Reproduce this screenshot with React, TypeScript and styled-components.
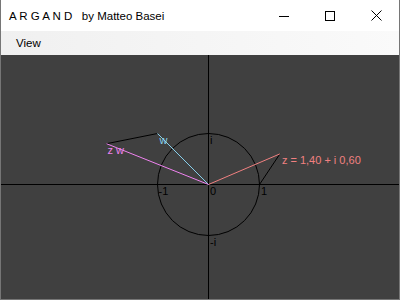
import styled, { createGlobalStyle } from "styled-components";

const GlobalStyle = createGlobalStyle`
  html, body {
    margin: 0;
    padding: 0;
    background: #ffffff;
  }
`;

const Window = styled.div`
  width: 400px;
  height: 300px;
  box-sizing: border-box;
  border: 1px solid #767676;
  border-top: none;
  display: flex;
  flex-direction: column;
  font-family: "Liberation Sans", Arial, sans-serif;
  overflow: hidden;
`;

const TitleBar = styled.div`
  height: 31px;
  flex: none;
  display: flex;
  align-items: center;
  background: #ffffff;
`;

const Title = styled.div`
  flex: 1;
  padding-left: 8px;
  font-size: 11.5px;
  color: #000000;
  white-space: pre;
  padding-top: 1px;
`;

const Controls = styled.div`
  display: flex;
  height: 100%;
`;

const ControlButton = styled.div`
  width: 46px;
  height: 100%;
  display: flex;
  align-items: center;
  justify-content: center;
`;

const MenuBar = styled.div`
  height: 24px;
  flex: none;
  display: flex;
  align-items: center;
  background: linear-gradient(to right, #f0f0f0, #fafafa);
`;

const MenuItem = styled.span`
  padding: 0 8px 0 15px;
  font-size: 11.5px;
  color: #000000;
`;

const Canvas = styled.div`
  flex: 1;
  background: #404040;
  position: relative;
`;

const Plot = styled.svg`
  display: block;
  width: 100%;
  height: 100%;
`;

const Label = styled.text<{ $color: string }>`
  font-family: "Liberation Sans", Arial, sans-serif;
  font-size: 11px;
  fill: ${(p) => p.$color};
`;

// origin of the complex plane inside the canvas, in px, and pixels per unit
const O = { x: 207.5, y: 129.5 };
const R = 51;

const z = { re: 1.4, im: 0.6 };
const w = { re: -1, im: 1 };
const zw = { re: z.re * w.re - z.im * w.im, im: z.re * w.im + z.im * w.re };

const px = (c: { re: number; im: number }) => ({ x: O.x + c.re * R, y: O.y - c.im * R });

const fmt = (v: number) => v.toFixed(2).replace(".", ",");

export default function App() {
  const pz = px(z);
  const pw = px(w);
  const pzw = px(zw);
  const one = px({ re: 1, im: 0 });

  return (
    <>
      <GlobalStyle />
      <Window>
        <TitleBar>
          <Title>{"A R G A N D   by Matteo Basei"}</Title>
          <Controls>
            <ControlButton>
              <svg width="10" height="10" viewBox="0 0 10 10">
                <line x1="0" y1="5.5" x2="10" y2="5.5" stroke="#000" strokeWidth="1" />
              </svg>
            </ControlButton>
            <ControlButton>
              <svg width="10" height="10" viewBox="0 0 10 10">
                <rect x="0.5" y="0.5" width="9" height="9" fill="none" stroke="#000" strokeWidth="1" />
              </svg>
            </ControlButton>
            <ControlButton>
              <svg width="11" height="11" viewBox="0 0 11 11">
                <path d="M0.5 0.5 L10.5 10.5 M10.5 0.5 L0.5 10.5" stroke="#000" strokeWidth="1" />
              </svg>
            </ControlButton>
          </Controls>
        </TitleBar>
        <MenuBar>
          <MenuItem>View</MenuItem>
        </MenuBar>
        <Canvas>
          <Plot viewBox="0 0 398 244" preserveAspectRatio="none">
            <line x1="0" y1={O.y} x2="398" y2={O.y} stroke="#000" strokeWidth="1" />
            <line x1={O.x} y1="0" x2={O.x} y2="244" stroke="#000" strokeWidth="1" />
            <circle cx={O.x} cy={O.y} r={R} fill="none" stroke="#000" strokeWidth="1" />

            <line x1={pz.x} y1={pz.y} x2={one.x} y2={one.y} stroke="#000" strokeWidth="1" />
            <line x1={pw.x} y1={pw.y} x2={pzw.x} y2={pzw.y} stroke="#000" strokeWidth="1" />

            <line x1={O.x} y1={O.y} x2={pz.x} y2={pz.y} stroke="#f08080" strokeWidth="1" />
            <line x1={O.x} y1={O.y} x2={pw.x} y2={pw.y} stroke="#87ceeb" strokeWidth="1" />
            <line x1={O.x} y1={O.y} x2={pzw.x} y2={pzw.y} stroke="#ee82ee" strokeWidth="1" />

            <Label $color="#000" x={O.x + 1.5} y={O.y - R + 10.5}>i</Label>
            <Label $color="#000" x={O.x + 1.5} y={O.y + R + 10.5}>-i</Label>
            <Label $color="#000" x={O.x - R + 1} y={O.y + 10.5}>-1</Label>
            <Label $color="#000" x={O.x + 1.5} y={O.y + 10.5}>0</Label>
            <Label $color="#000" x={O.x + R + 1.5} y={O.y + 10.5}>1</Label>

            <Label $color="#f08080" x={pz.x + 2} y={pz.y + 10.5}>
              {`z = ${fmt(z.re)} + i ${fmt(z.im)}`}
            </Label>
            <Label $color="#87ceeb" x={pw.x + 2} y={pw.y + 10.5}>w</Label>
            <Label $color="#ee82ee" x={pzw.x + 1} y={pzw.y + 10}>z w</Label>
          </Plot>
        </Canvas>
      </Window>
    </>
  );
}
